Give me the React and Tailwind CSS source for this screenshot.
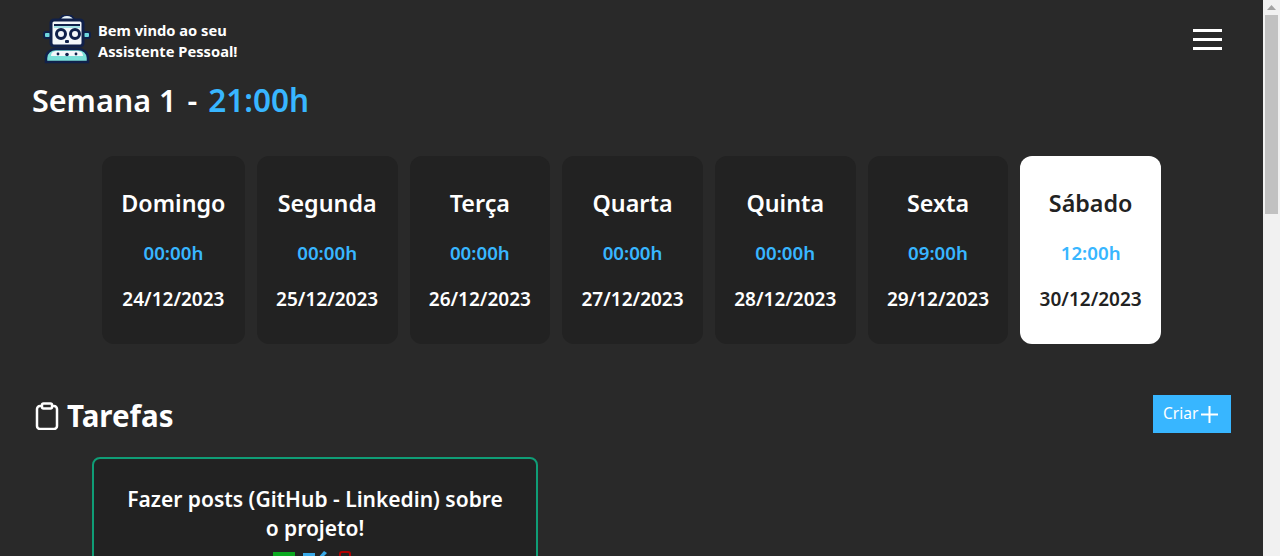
import React from "react";

const days = [
  { name: "Domingo", hours: "00:00h", date: "24/12/2023" },
  { name: "Segunda", hours: "00:00h", date: "25/12/2023" },
  { name: "Terça", hours: "00:00h", date: "26/12/2023" },
  { name: "Quarta", hours: "00:00h", date: "27/12/2023" },
  { name: "Quinta", hours: "00:00h", date: "28/12/2023" },
  { name: "Sexta", hours: "09:00h", date: "29/12/2023" },
  { name: "Sábado", hours: "12:00h", date: "30/12/2023", active: true },
];

const RobotLogo = () => (
  <svg viewBox="0 0 48 50" className="w-12 h-[50px]">
    <path d="M17 5 a7 5 0 0 1 14 0z" fill="#e8f4f8" stroke="#10204a" strokeWidth="2" />
    <rect x="1" y="17" width="7" height="6" rx="2" fill="#6fd6de" stroke="#10204a" strokeWidth="2" />
    <rect x="40" y="17" width="7" height="6" rx="2" fill="#6fd6de" stroke="#10204a" strokeWidth="2" />
    <rect x="8" y="5" width="32" height="26" rx="3" fill="#f4f7fa" stroke="#10204a" strokeWidth="3" />
    <rect x="11" y="9" width="26" height="2" fill="#10204a" />
    <rect x="11" y="11" width="26" height="2" fill="#a5e3e6" />
    <circle cx="18" cy="19" r="4.5" fill="#f4f7fa" stroke="#10204a" strokeWidth="3" />
    <circle cx="32" cy="19" r="4.5" fill="#f4f7fa" stroke="#10204a" strokeWidth="3" />
    <rect x="22" y="25" width="4" height="3" rx="1" fill="#10204a" />
    <path d="M3 47 v-4 a10 9 0 0 1 10 -9 h22 a10 9 0 0 1 10 9 v4z" fill="#7adfd8" stroke="#10204a" strokeWidth="2.5" />
    <path d="M8 41 a6 5 0 0 1 5 -5 h22 a6 5 0 0 1 5 5z" fill="#f4f7fa" />
    <circle cx="15" cy="39" r="1.4" fill="#10204a" />
    <circle cx="24" cy="39.5" r="1.8" fill="#10204a" />
    <circle cx="33" cy="39" r="1.4" fill="#10204a" />
  </svg>
);

const ClipboardIcon = () => (
  <svg viewBox="0 0 24 28" className="w-6 h-7" fill="none" stroke="white" strokeWidth="2.5">
    <path d="M7 4H5a3 3 0 0 0-3 3v17a3 3 0 0 0 3 3h14a3 3 0 0 0 3-3V7a3 3 0 0 0-3-3h-2" />
    <rect x="7" y="1.5" width="10" height="5" rx="1.5" />
  </svg>
);

const PlusIcon = () => (
  <svg viewBox="0 0 17 17" className="w-[17px] h-[17px]" stroke="white" strokeWidth="2">
    <path d="M8.5 0v17M0 8.5h17" />
  </svg>
);

const DayCard = ({ day }) => (
  <div
    className={
      day.active
        ? "flex flex-col items-center h-[188px] px-[19.3px] pt-8 rounded-xl bg-white text-[#222222]"
        : "flex flex-col items-center h-[188px] px-[19.3px] pt-8 rounded-xl bg-[#222222] text-white"
    }
  >
    <span className="text-[23.3px] leading-[30px] font-semibold">{day.name}</span>
    <span className="mt-[23px] text-[18.7px] leading-6 font-semibold text-[#38b6ff]">{day.hours}</span>
    <span className="mt-[22px] text-[19px] leading-6 font-semibold">{day.date}</span>
  </div>
);

export default function App() {
  return (
    <div className="flex h-[556px] overflow-hidden bg-[#292929] font-['Noto_Sans',sans-serif] text-white">
      <main className="w-[1263px] shrink-0">
        <header className="flex items-center justify-between h-20 pl-[43px] pr-[41px]">
          <div className="flex items-center gap-[7px]">
            <RobotLogo />
            <p className="pt-0.5 text-[14.7px] leading-[21px] font-bold">
              Bem vindo ao seu
              <br />
              Assistente Pessoal!
            </p>
          </div>
          <div className="flex flex-col gap-1.5 w-[29px] -mt-px">
            <span className="h-[3px] bg-white" />
            <span className="h-[3px] bg-white" />
            <span className="h-[3px] bg-white" />
          </div>
        </header>

        <h1 className="pl-8 text-[30.5px] leading-10 font-semibold">
          Semana 1<span className="mx-[11px]">-</span>
          <span className="text-[31.5px] text-[#38b6ff]">21:00h</span>
        </h1>

        <section className="flex justify-center gap-3 mt-9">
          {days.map((day) => (
            <DayCard key={day.name} day={day} />
          ))}
        </section>

        <section className="flex items-center justify-between mt-[51px] pl-[35px] pr-8">
          <div className="flex items-center gap-2">
            <ClipboardIcon />
            <h2 className="text-[29.5px] leading-[42px] font-bold">Tarefas</h2>
          </div>
          <button className="self-start flex items-center gap-[3px] w-[78px] h-[38px] pl-2.5 bg-[#38b6ff] text-[15.5px] text-white">
            Criar
            <PlusIcon />
          </button>
        </section>

        <article className="w-[446px] h-[200px] mt-5 ml-[92px] px-8 pt-[26px] rounded-lg border-2 border-[#0f9d76] bg-[#222222] text-center">
          <h3 className="text-[21px] leading-[29px] font-semibold">
            Fazer posts (GitHub - Linkedin) sobre o projeto!
          </h3>
          <div className="flex items-start gap-2 mt-2 pl-[147px]">
            <span className="w-[22px] h-4 mt-px bg-[#0aa81f]" />
            <svg viewBox="0 0 24 16" className="w-6 h-4" fill="#38a9e8">
              <path d="M0 2h12v14H0zM14 8l7-8 3 2-9 9z" />
            </svg>
            <svg viewBox="0 0 14 16" className="ml-0.5 w-3.5 h-4" fill="none" stroke="#b30000" strokeWidth="2">
              <path d="M3 16V3a2 2 0 0 1 2-2h6a2 2 0 0 1 2 2v13" />
            </svg>
          </div>
        </article>
      </main>

      <aside className="flex flex-col items-center w-[17px] shrink-0 bg-[#f1f1f1]">
        <svg viewBox="0 0 9 5" className="mt-[5px] w-[9px] h-[5px]" fill="#a3a3a3">
          <path d="M4.5 0L9 5H0z" />
        </svg>
        <div className="mt-[5px] w-full h-[199px] px-[2px]">
          <div className="h-full bg-[#c1c1c1]" />
        </div>
      </aside>
    </div>
  );
}
